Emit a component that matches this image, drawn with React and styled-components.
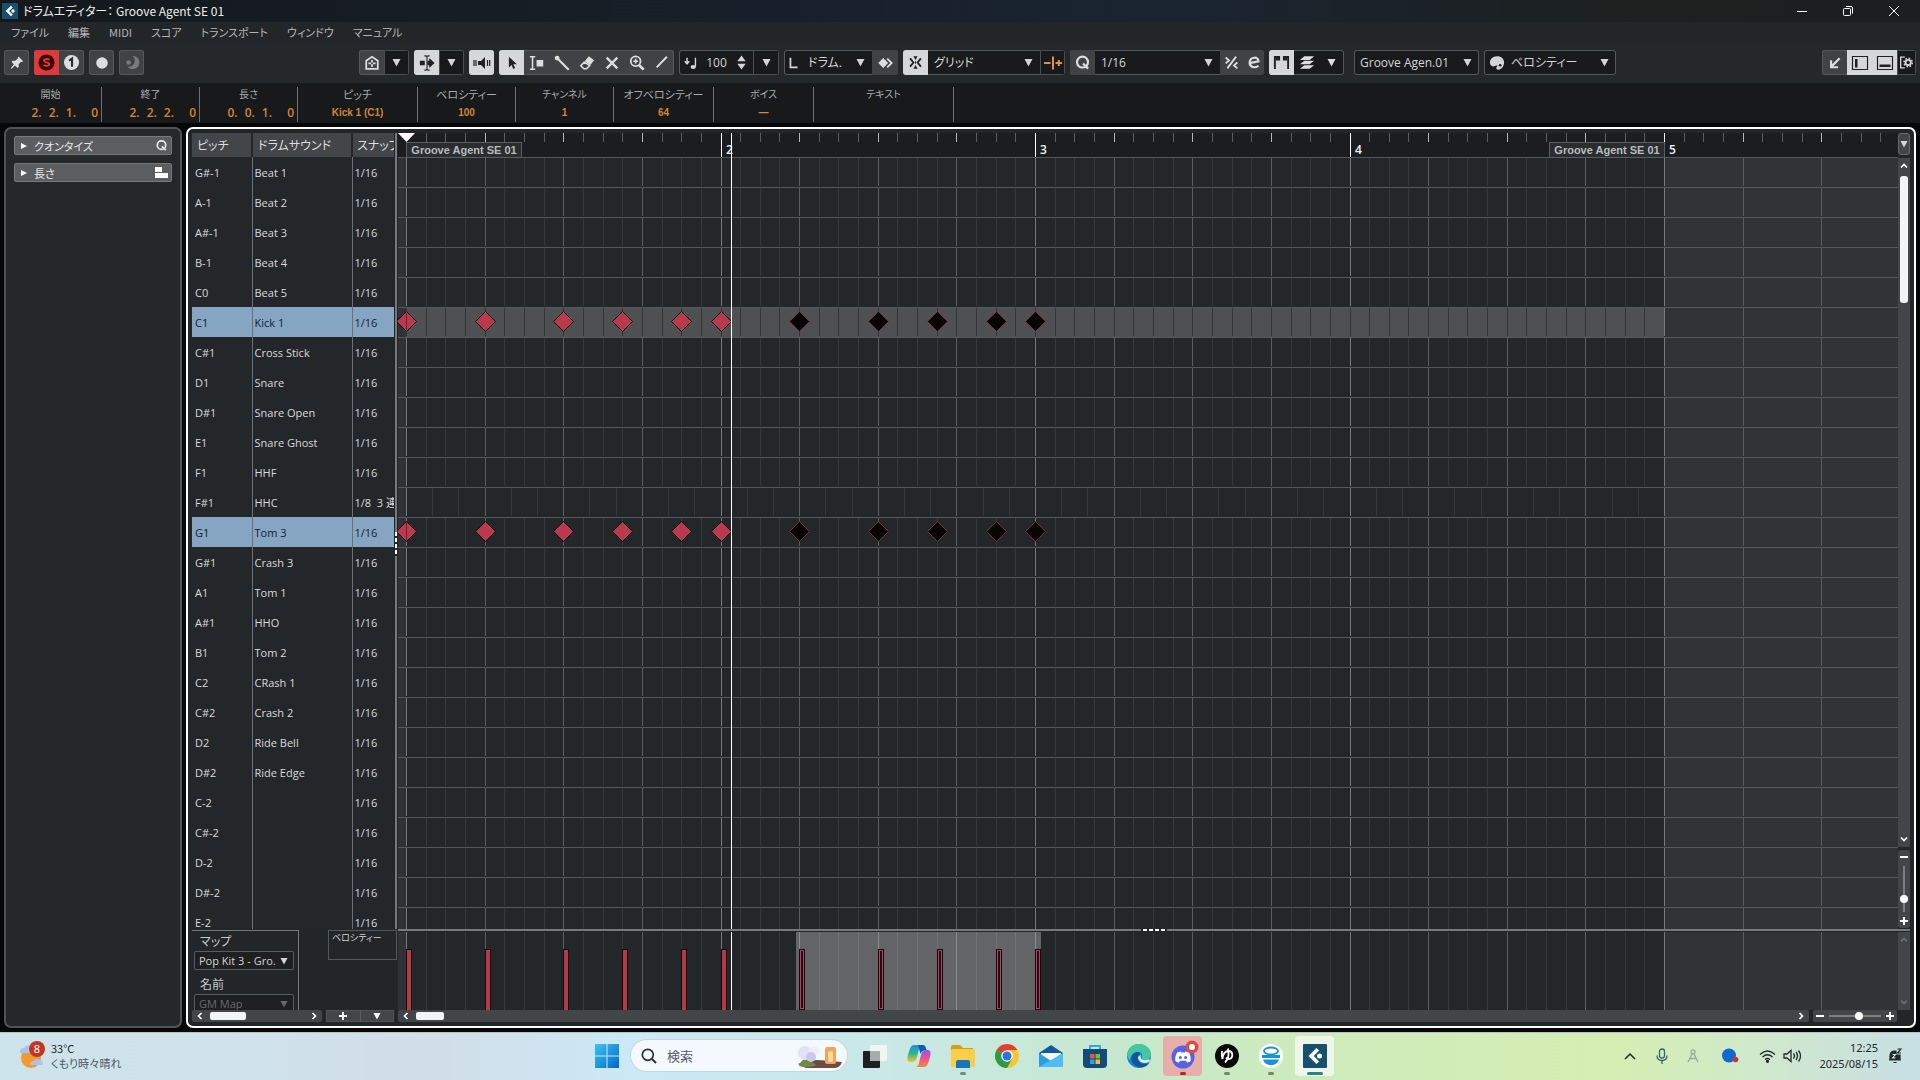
import React from "react";
import styled, { createGlobalStyle, css } from "styled-components";

const UI_FONT = '"Noto Sans CJK JP", "Noto Sans", sans-serif';
const LATIN_FONT = '"Open Sans", "Noto Sans CJK JP", sans-serif';
const ARIAL_FONT = '"Liberation Sans", "Noto Sans CJK JP", sans-serif';

const Global = createGlobalStyle`
  * { box-sizing: border-box; }
  body {
    margin: 0;
    background: #060708;
    color: #d4d5d6;
    font: 12px/16px ${UI_FONT};
    font-feature-settings: "palt";
    overflow: hidden;
  }
  button, select, input {
    margin: 0;
    padding: 0;
    border: 0;
    border-radius: 0;
    background: none;
    color: inherit;
    font: inherit;
    font-feature-settings: inherit;
  }
  svg { display: block; flex: none; }
`;

const Screen = styled.div`
  display: flex;
  flex-direction: column;
  height: 100vh;
`;

/* ---------- title bar and menu ---------- */

const TitleBar = styled.header`
  display: flex;
  align-items: center;
  height: 22px;
  padding-left: 2px;
  gap: 5px;
  background: linear-gradient(90deg, #14181b 0%, #17202a 40%, #1a2430 62%, #1c201f 84%, #1c1f1f 100%);
  color: #eceded;
`;
const Title = styled.h1`
  flex: 1;
  margin: 0;
  font-size: 12px;
  line-height: 16px;
  font-weight: 400;
  white-space: pre;
`;
const WindowButtons = styled.div`
  display: flex;
  padding-right: 3px;
`;
const WindowButton = styled.button`
  display: grid;
  place-items: center;
  width: 46px;
  height: 22px;
`;
const MenuBar = styled.nav`
  display: flex;
  gap: 19px;
  height: 22px;
  padding: 0 0 2px 11px;
  align-items: center;
  background: #232628;
  color: #b4b6b8;
`;
const MenuLink = styled.a`
  color: inherit;
  text-decoration: none;
  font-size: 11px;
  line-height: 16px;
`;

/* ---------- toolbar ---------- */

const Toolbar = styled.div`
  display: flex;
  align-items: center;
  justify-content: space-between;
  height: 39px;
  padding: 0 4px 2px;
  background: #25282b;
`;
const ToolSide = styled.div`
  display: flex;
  gap: 5px;
`;
const ToolMain = styled.div`
  display: flex;
  gap: 5px;
  flex: 1;
  padding-left: 215px;
`;
const Group = styled.div`
  display: flex;
  height: 25px;
  border-radius: 3px;
  overflow: hidden;
  box-shadow: inset 0 0 0 1px #55585b;
  background: ${(p) => (p.$dark ? "#181a1c" : "#404346")};
  ${(p) => p.$gap && css`margin-left: 5px;`}
`;
const tones = {
  plain: ["transparent", "#dcdddd"],
  grey: ["#404346", "#dcdddd"],
  on: ["#d6d7d8", "#1f2123"],
  red: ["#de3a3a", "#3a0808"],
  dark: ["#17191b", "#d4d5d6"],
  dim: ["transparent", "#77797b"],
};
const Tool = styled.button`
  display: grid;
  place-items: center;
  width: ${(p) => p.$w || 25}px;
  height: 25px;
  background: ${(p) => tones[p.$tone || "plain"][0]};
  color: ${(p) => tones[p.$tone || "plain"][1]};
  ${(p) => p.$tone === "dark" && css`box-shadow: inset 0 0 0 1px #4b4e51;`}
`;
const Field = styled.label`
  display: flex;
  align-items: center;
  gap: ${(p) => (p.$tight ? 2 : 6)}px;
  width: ${(p) => p.$w}px;
  height: 25px;
  padding: 0 ${(p) => (p.$tight ? 4 : 7)}px 0 ${(p) => p.$pad || 6}px;
`;
const PlainSelect = styled.select`
  appearance: none;
  flex: 1;
  min-width: 0;
  height: 18px;
  line-height: 18px;
  font-family: ${LATIN_FONT};
  font-size: 12px;
  opacity: 1;
`;
const VelocityInput = styled.input`
  flex: 1;
  min-width: 0;
  text-align: center;
  font-family: ${LATIN_FONT};
  font-size: 12px;
`;

/* ---------- info line ---------- */

const InfoLine = styled.dl`
  display: flex;
  height: 40px;
  margin: 0;
  padding: 4px 0 1px;
  background: #17191b;
`;
const InfoCell = styled.div`
  display: flex;
  flex-direction: column;
  align-items: center;
  width: ${(p) => p.$w}px;
  border-right: 1px solid #6d7073;
`;
const InfoLabel = styled.dt`
  height: 17px;
  font-size: ${(p) => (p.$large ? 11 : 10)}px;
  line-height: 14px;
  color: #a9abad;
`;
const InfoValue = styled.dd`
  margin: 0;
  height: 17px;
  line-height: 17px;
  color: #cf8838;
  font-family: ${(p) => (p.$time ? LATIN_FONT : ARIAL_FONT)};
  font-size: ${(p) => (p.$time ? 12 : 10)}px;
  font-weight: ${(p) => (p.$time ? 600 : 700)};
  ${(p) => p.$time && css`
    display: flex;
    align-self: flex-end;
    gap: 7px;
    padding-right: 3px;
  `}
`;
const LastTick = styled.span`
  min-width: 15px;
  text-align: right;
`;

/* ---------- workspace ---------- */

const Workspace = styled.main`
  flex: 1;
  min-height: 0;
  display: flex;
  gap: 4px;
  padding: 4px;
`;
const Inspector = styled.aside`
  display: flex;
  flex-direction: column;
  gap: 8px;
  width: 178px;
  padding: 7px 8px;
  border: 2px solid #515457;
  border-radius: 7px;
  background: #25282b;
`;
const InspectorTab = styled.button`
  display: flex;
  align-items: center;
  gap: 7px;
  height: 19px;
  padding: 0 3px 0 6px;
  border: 1px solid #77797b;
  border-radius: 2px;
  background: #5b5e60;
  color: #e8e9e9;
  span { flex: 1; text-align: left; font-size: 11px; }
`;
const Editor = styled.section`
  flex: 1;
  min-width: 0;
  display: flex;
  flex-direction: column;
  padding: 4px;
  border: 2px solid #fff;
  border-radius: 7px;
  background: #232628;
`;
const TopRow = styled.div`
  flex: 1;
  min-height: 0;
  display: flex;
`;
const ListPane = styled.div`
  width: 203px;
  overflow: hidden;
`;
const DrumTable = styled.table`
  table-layout: fixed;
  width: 202px;
  border-collapse: collapse;
  font-family: ${LATIN_FONT};
`;
const HeadCell = styled.th`
  height: 24px;
  padding: 0 0 0 5px;
  border-right: 2px solid #232628;
  background: #434648;
  text-align: left;
  font-family: ${UI_FONT};
  font-size: 12px;
  font-weight: 400;
  line-height: 20px;
  color: #dcddde;
  white-space: nowrap;
  overflow: hidden;
  &:last-child { border-right: 0; padding-left: 4px; }
`;
const DrumRow = styled.tr`
  height: 30px;
  color: ${(p) => (p.$selected ? "#0d2036" : "#d9dadb")};
  background: ${(p) => (p.$selected ? "#86a5c3" : "#24272a")};
`;
const DrumCell = styled.td`
  padding: 1px 0 0 3px;
  font-size: 11px;
  line-height: 16px;
  white-space: pre;
  overflow: hidden;
  & + & { padding-left: 2px; border-left: 1px solid #6d7073; }
`;
const VDivider = styled.div`
  display: flex;
  align-items: center;
  width: 2px;
  margin-right: 1px;
  padding-top: 26px;
  background: #77797b;
`;
const VGrip = styled.i`
  width: 2px;
  height: 24px;
  background: repeating-linear-gradient(180deg, #fff 0 4px, #232628 4px 6px);
`;
const Canvas = styled.div`
  flex: 1;
  min-width: 0;
  display: flex;
  flex-direction: column;
  overflow: hidden;
`;
const Ruler = styled.div`
  position: relative;
  height: 25px;
  background: #1b1d20;
  overflow: hidden;
`;
const Notes = styled.div`
  flex: 1;
  min-height: 0;
  overflow: hidden;
  background: #24272a;
`;
const BarNumber = styled.span`
  position: absolute;
  left: ${(p) => p.$x}px;
  top: 9px;
  font: 600 12px/16px ${LATIN_FONT};
  color: #f2f2f2;
`;
const PartLabel = styled.span`
  position: absolute;
  left: ${(p) => p.$x}px;
  top: 9px;
  width: 116px;
  height: 16px;
  border: 1px solid #5b5e60;
  background: #2a2d2f;
  color: #b9bbbd;
  text-align: center;
  font: 700 11px/14px ${ARIAL_FONT};
  white-space: nowrap;
`;
const Strip = styled.div`
  display: flex;
  flex-direction: column;
  width: 12px;
`;
const RulerMenu = styled.button`
  display: grid;
  place-items: center;
  height: 22px;
  margin-bottom: 3px;
  border: 1px solid #66696b;
  border-radius: 3px;
  background: #434648;
`;
const VScroll = styled.div`
  display: flex;
  flex-direction: column;
  align-items: center;
  flex: 1;
  padding: 3px 0;
  background: #434648;
  color: ${(p) => (p.$dim ? "#6d7073" : "#fff")};
`;
const VThumb = styled.div`
  width: 8px;
  height: 127px;
  margin: 5px 0 auto;
  border-radius: 3px;
  background: #f2f4f5;
`;
const Spacer = styled.div`
  flex: 1;
`;
const ArrowButton = styled.button`
  display: grid;
  place-items: center;
  width: 12px;
  height: 10px;
`;
const VZoom = styled.div`
  display: flex;
  flex-direction: column;
  align-items: center;
  height: 78px;
  margin: 3px 0 1px;
  padding: 2px 0;
  border-radius: 3px;
  background: #434648;
  color: #fff;
`;
const thumb = css`
  -webkit-appearance: none;
  width: 8px;
  height: 8px;
  border-radius: 50%;
  background: #fff;
`;
const VRange = styled.input`
  -webkit-appearance: none;
  appearance: none;
  writing-mode: vertical-lr;
  width: 8px;
  flex: 1;
  min-height: 0;
  margin: 4px 0;
  background: linear-gradient(90deg, transparent 3px, #7d8082 3px 5px, transparent 5px);
  &::-webkit-slider-thumb { ${thumb} }
`;
const HRange = styled.input`
  -webkit-appearance: none;
  appearance: none;
  flex: 1;
  min-width: 0;
  height: 8px;
  margin: 0 3px;
  background: linear-gradient(180deg, transparent 3px, #7d8082 3px 5px, transparent 5px);
  &::-webkit-slider-thumb { ${thumb} }
`;

/* ---------- controller lane ---------- */

const BottomRow = styled.div`
  display: flex;
  height: 81px;
`;
const MapPane = styled.div`
  display: flex;
  width: 206px;
  padding-top: 1px;
  align-items: flex-start;
  justify-content: space-between;
  overflow: hidden;
`;
const MapBox = styled.div`
  display: flex;
  flex-direction: column;
  width: 107px;
  height: 100px;
  padding: 2px 4px 0 2px;
  border-top: 1px solid #77797b;
  border-right: 1px solid #77797b;
`;
const MapLabel = styled.label`
  padding-left: 6px;
  margin-bottom: 2px;
  font-size: 12px;
  line-height: 16px;
  color: #c6c8ca;
`;
const MapSelect = styled.div`
  display: flex;
  align-items: center;
  gap: 2px;
  height: 19px;
  margin-bottom: 6px;
  padding: 0 5px 0 4px;
  border: 1px solid #595c5f;
  border-radius: 2px;
  background: #1d1f21;
  color: ${(p) => (p.$off ? "#66696b" : "#d4d5d6")};
  ${PlainSelect} { font-size: 11px; height: 16px; line-height: 16px; color: inherit; opacity: 1; }
`;
const LaneName = styled.button`
  width: 69px;
  height: 30px;
  padding: 0 0 0 3px;
  display: flex;
  margin-right: 1px;
  border: 1px solid #55585b;
  font-size: 9px;
  line-height: 14px;
`;
const LaneArea = styled.div`
  flex: 1;
  min-width: 0;
  display: flex;
  flex-direction: column;
`;
const HDivider = styled.div`
  display: flex;
  justify-content: center;
  height: 2px;
  margin-bottom: 1px;
  background: #77797b;
`;
const HGrip = styled.i`
  width: 26px;
  background: repeating-linear-gradient(90deg, #232628 0 2px, #fff 2px 6px);
`;
const LaneRow = styled.div`
  flex: 1;
  min-height: 0;
  display: flex;
`;
const Lane = styled.div`
  flex: 1;
  min-width: 0;
  overflow: hidden;
`;
const ScrollRow = styled.div`
  display: flex;
  height: 12px;
  padding-right: 13px;
  color: #fff;
`;
const HScroll = styled.div`
  display: flex;
  align-items: center;
  ${(p) => (p.$w ? css`width: ${p.$w}px;` : css`flex: 1;`)}
  margin-right: 4px;
  padding: 0 2px;
  border-radius: 2px;
  background: #434648;
`;
const HThumb = styled.div`
  width: ${(p) => p.$w}px;
  height: 8px;
  margin: 0 auto 0 4px;
  border-radius: 2px;
  background: #f2f4f5;
`;
const AddGroup = styled.div`
  display: flex;
  width: 68px;
  margin-right: 4px;
  border: 1px solid #515457;
  background: #434648;
`;
const AddButton = styled.button`
  display: grid;
  place-items: center;
  flex: 1;
  & + & { border-left: 1px solid #5b5e60; }
`;
const HZoom = styled.div`
  display: flex;
  align-items: center;
  width: 84px;
  padding: 0 1px;
  border-radius: 2px;
  background: #434648;
`;

/* ---------- taskbar ---------- */

const Taskbar = styled.footer`
  display: grid;
  grid-template-columns: 1fr auto 1fr;
  align-items: center;
  height: 48px;
  padding: 0 18px 2px 19px;
  border-top: 1px solid #b7c4c6;
  background: linear-gradient(90deg, #cde3ea 0%, #cfe2ea 12%, #d1dde8 22%, #cce9f5 33%, #c9e8ea 44%, #c7e8cf 58%, #cdebbb 68%, #d6eeb2 84%, #d0e9c8 91%, #c8dfe6 100%);
  color: #20282c;
`;
const Weather = styled.button`
  display: flex;
  gap: 6px;
  text-align: left;
  justify-self: start;
  font-size: 11px;
  line-height: 15px;
`;
const WeatherText = styled.span`
  display: grid;
  small { font-size: 11px; color: #4d595f; }
`;
const Apps = styled.div`
  display: flex;
  align-items: center;
  gap: 5px;
`;
const AppButton = styled.button`
  display: flex;
  flex-direction: column;
  align-items: center;
  justify-content: flex-end;
  gap: 4px;
  width: 39px;
  height: 40px;
  padding-bottom: 1px;
  border-radius: 4px;
  background: ${(p) => p.$bg || "none"};
`;
const Dot = styled.i`
  width: ${(p) => p.$w || 6}px;
  height: 3px;
  border-radius: 2px;
  background: ${(p) => p.$c || "transparent"};
`;
const Search = styled.label`
  display: flex;
  align-items: center;
  gap: 10px;
  width: 216px;
  height: 31px;
  margin: 0 3px 0 0;
  padding: 0 3px 0 10px;
  border-radius: 16px;
  background: #f3f9fc;
  box-shadow: 0 0 0 1px #c5d7de;
  input { flex: 1; min-width: 0; font-size: 13px; }
  input::placeholder { color: #55606a; opacity: 1; }
`;
const Tray = styled.div`
  display: flex;
  align-items: center;
  justify-self: end;
  gap: 10px;
`;
const TrayButton = styled.button`
  display: grid;
  place-items: center;
  width: ${(p) => p.$w || 22}px;
  height: 32px;
`;
const Clock = styled.time`
  width: 62px;
  text-align: right;
  font: 11px/16px "Noto Sans", sans-serif;
  white-space: pre-line;
`;

/* ---------- icons ---------- */

const Caret = ({ s = 9 }) => (
  <svg width={s} height={s} viewBox="0 0 9 9"><path d="M0.5 1h8L4.500 8.500z" fill="currentColor" /></svg>
);
const Chevron = ({ r = 0 }) => (
  <svg width="8" height="8" viewBox="0 0 8 8"><path d="M1 5.500 4 2.500 7 5.500" transform={`rotate(${r} 4 4)`} fill="none" stroke="currentColor" strokeWidth="1.600" /></svg>
);
const Sign = ({ plus }) => (
  <svg width="8" height="8" viewBox="0 0 8 8" shapeRendering="crispEdges"><path d={plus ? "M0 4h8M4 0v8" : "M0 4h8"} stroke="currentColor" strokeWidth="2" /></svg>
);
const Disclosure = () => (
  <svg width="6" height="8" viewBox="0 0 6 8"><path d="M0 1l6 3-6 3z" fill="#fff" /></svg>
);
const glyphs = {
  pin: <path fill="currentColor" d="M11 2l5 5-1.500 1-1-.3-2.700 2.800.2 2.700-1.400 1.300-2.800-2.800L3 15.500l-1-.5 3.500-4.500L2.800 7.800 4 6.400l3 .2L10 3.800 9.700 3z" />,
  solo: <><circle cx="9" cy="9" r="8.500" fill="currentColor" /><path d="M12 6.300C10.500 4.800 6.300 5 6.300 7c0 2.300 5.500 1.400 5.500 3.800 0 2.100-4.300 2.300-6 .7" fill="none" stroke="#de3a3a" strokeWidth="1.900" /></>,
  one: <><circle cx="9" cy="9" r="8" fill="currentColor" /><path d="M6.500 7 9.600 4.800V13.500" fill="none" stroke="#2a2c2e" strokeWidth="2.200" /></>,
  rec: <circle cx="9" cy="9" r="6.500" fill="currentColor" />,
  moon: <><path d="M10 2a7 7 0 1 1-5 11.500A6.500 6.500 0 0 0 10 2z" fill="currentColor" /><circle cx="6" cy="9" r="2.500" fill="currentColor" /></>,
  home: <><path d="M2.500 15.500V6.500L9 2l6.500 4.500v9z" fill="none" stroke="currentColor" strokeWidth="2" /><path d="M9 5.500v8M5 9.500h8" stroke="currentColor" strokeWidth="2" strokeDasharray="3 2" /></>,
  scroll: <><path d="M1 6.500h5.500v5H1zM11.500 3.500 17.500 9l-6 5.500v-3h-2v-5h2z" fill="currentColor" /><path d="M6 1h2l1 1 1-1h2M6 17h2l1-1 1 1h2M9 1v16" stroke="currentColor" strokeWidth="1.200" fill="none" /></>,
  speaker: <><path d="M5 7h3l4-4v12l-4-4H5z" fill="currentColor" /><path d="M1 6v6M3 6v6M14.500 6v6M16.700 6v6" stroke="currentColor" strokeWidth="1.200" /></>,
  arrow: <path d="M5.500 2v12l3-2.800 2 4.500 2-1-2-4.300h4z" fill="currentColor" />,
  range: <><path d="M1 2h6M1 16h6M4 2v14" stroke="currentColor" strokeWidth="1.800" /><path d="M8.500 5.500h7.500v7.500h-7.500z" fill="currentColor" /></>,
  stick: <><path d="M4 4l12.500 12.500" stroke="currentColor" strokeWidth="2.400" /><circle cx="3.500" cy="3.500" r="2.700" fill="currentColor" /></>,
  eraser: <><path d="M11 1.500l6 4.500-4.500 5.500L6.500 7z" fill="currentColor" /><path d="M6 8 2 12l3.500 3.500h3l3.500-3.500z" fill="none" stroke="currentColor" strokeWidth="1.700" /></>,
  mute: <path d="M3 3l12 12M15 3l-12 12" stroke="currentColor" strokeWidth="2.600" />,
  zoom: <><circle cx="7.500" cy="7" r="5.500" fill="none" stroke="currentColor" strokeWidth="2" /><path d="M11.500 11.500l5 5" stroke="currentColor" strokeWidth="3" /><path d="M4.800 7h5.400M7.500 4.300v5.400" stroke="currentColor" strokeWidth="1.800" /></>,
  line: <><path d="M3 14 14.500 2" stroke="currentColor" strokeWidth="2.200" /></>,
  noteVel: <><path d="M4.500 3v7M2 7l2.500 3L7 7" stroke="currentColor" strokeWidth="1.700" fill="none" /><path d="M14 3v10" stroke="currentColor" strokeWidth="1.500" /><ellipse cx="11.500" cy="13.500" rx="3" ry="2.300" fill="currentColor" /></>,
  updown: <path d="M4 7.500 9 0.500l5 7zM4 10.500l5 7 5-7z" fill="currentColor" />,
  corner: <path d="M5 3v11h8" fill="none" stroke="currentColor" strokeWidth="2" />,
  diamonds: <><path d="M7 3.500 12.500 9 7 14.500 1.500 9z" fill="currentColor" /><path d="M11.500 4 16.500 9l-5 5" fill="none" stroke="currentColor" strokeWidth="2" /></>,
  snap: <><path d="M2.500 4 6.500 9l-4 5M15.500 4l-4 5 4 5" fill="none" stroke="currentColor" strokeWidth="2.200" /><path d="M6.500 1.500h5L9 6zM6.500 16.500h5L9 12z" fill="currentColor" /><path d="M9 7.500v3" stroke="currentColor" strokeWidth="1.200" /></>,
  gridType: <path d="M0 9h6.500M9 2.500v13M11.500 9H18M14.800 6v6" stroke="#e0913c" strokeWidth="2" fill="none" />,
  q: <><circle cx="9" cy="8.500" r="5.800" fill="none" stroke="currentColor" strokeWidth="2.300" /><path d="M9.500 10l5.500 5.500" stroke="currentColor" strokeWidth="2.300" /></>,
  iq: <><path d="M14.500 2 4 16" stroke="currentColor" strokeWidth="2.200" /><path d="M2 3l4 3.500L2 10M16 9l-4 3.500 4 3.500" fill="none" stroke="currentColor" strokeWidth="2.200" /></>,
  edit: <path d="M4 9.800 15 7.500c0-6-9.500-5.500-10.500.5S9.500 16.500 15 13" fill="none" stroke="currentColor" strokeWidth="2.600" />,
  step: <><path d="M2 16V3h5M11 3h5v13" fill="none" stroke="currentColor" strokeWidth="2" /><path d="M3 2h4.500v5H3zM10.500 2H15v5h-4.500z" fill="currentColor" /></>,
  layers: <path d="M6 1.500h11l-5 4H1zM6 6.500h11l-5 4H1zM6 11.500h11l-5 4H1z" fill="currentColor" />,
  palette: <><path d="M9 1.500c5 0 8 3 8 7s-3 8-6.500 8c-3 0-2.500-2.500-1.500-3.500S8 11 6.500 12.500 1 12 1 8.500s3-7 8-7z" fill="currentColor" /><circle cx="12.500" cy="11.500" r="1.500" fill="#181a1c" /></>,
  openArrow: <path d="M15 3 5 13M4 5.500v9h9" fill="none" stroke="currentColor" strokeWidth="2.800" />,
  zoneLeft: <><path d="M1.500 2.500h15v13h-15z" fill="none" stroke="currentColor" strokeWidth="1.200" /><path d="M4 5h2.500v8.500H4z" fill="currentColor" /></>,
  zoneDown: <><path d="M1.500 2.500h15v13h-15z" fill="none" stroke="currentColor" strokeWidth="1.200" /><path d="M3.500 10.500h11V13h-11z" fill="currentColor" /></>,
  setup: <><path d="M7 2.500H2v13h5" fill="none" stroke="currentColor" strokeWidth="1.600" /><circle cx="11" cy="9" r="3.200" fill="none" stroke="currentColor" strokeWidth="2.200" /><circle cx="11" cy="9" r="5" fill="none" stroke="currentColor" strokeWidth="1.800" strokeDasharray="2 1.900" /></>,
};
const Icon = ({ n, s = 16 }) => <svg width={s} height={s} viewBox="0 0 18 18">{glyphs[n]}</svg>;

const CubaseMark = ({ s }) => (
  <svg width={s} height={s} viewBox="0 0 24 24">
    <rect width="24" height="24" rx="1" fill="#17506f" />
    <path d="M13.500 4 5.500 12l8 8 2.600-2.600L10.700 12l5.400-5.400z" fill="#fff" />
    <circle cx="16.500" cy="12" r="2.500" fill="#fff" />
  </svg>
);

/* ---------- drum editor data ---------- */

const ORIGIN = 8;
const FOUR_BARS = 1258;
const at = (sixteenth) => ORIGIN + Math.round((sixteenth * FOUR_BARS) / 64);
const TOTAL = 160;
const CURSOR = 333;
const ROW = 30;

const drums = [
  ["G#-1", "Beat 1"], ["A-1", "Beat 2"], ["A#-1", "Beat 3"], ["B-1", "Beat 4"], ["C0", "Beat 5"],
  ["C1", "Kick 1"], ["C#1", "Cross Stick"], ["D1", "Snare"], ["D#1", "Snare Open"], ["E1", "Snare Ghost"],
  ["F1", "HHF"], ["F#1", "HHC", "1/8  3 連"], ["G1", "Tom 3"], ["G#1", "Crash 3"], ["A1", "Tom 1"],
  ["A#1", "HHO"], ["B1", "Tom 2"], ["C2", "CRash 1"], ["C#2", "Crash 2"], ["D2", "Ride Bell"],
  ["D#2", "Ride Edge"], ["C-2", ""], ["C#-2", ""], ["D-2", ""], ["D#-2", ""], ["E-2", ""],
];
const selectedRows = [5, 12];
const tripletRow = 11;
const steps = [0, 4, 8, 11, 14, 16, 20, 24, 27, 30, 32];
const isSelectedStep = (s) => s >= 20;
const range = (n) => Array.from({ length: n }, (_, i) => i);

function RulerTicks() {
  return (
    <svg width="100%" height="25" shapeRendering="crispEdges">
      {range(TOTAL).map((i) => {
        const bar = i % 16 === 0 && i > 0;
        const beat = i % 4 === 0;
        if (i === 0) return null;
        return <rect key={i} x={at(i)} y="0" width="1" height={bar && i !== 64 ? 24 : 9} fill={bar ? "#fff" : beat ? "#b4b6b8" : "#5b5e60"} />;
      })}
      <rect y="24" width="100%" height="1" fill="#55575a" />
      <rect x={CURSOR} width="1" height="25" fill="#fff" />
      <path d="M0 0h17l-8.500 9z" fill="#fff" shapeRendering="auto" />
    </svg>
  );
}

const lineColor = (i) => (i % 16 === 0 ? "#77797b" : i % 4 === 0 ? "#5b5e60" : "#35383b");

function NoteGrid() {
  const end = at(64);
  const height = drums.length * ROW + 300;
  return (
    <svg width="100%" height={height} shapeRendering="crispEdges">
      <rect width={ORIGIN} height={height} fill="#303236" />
      <rect x={end} width="3000" height={height} fill="#323336" />
      <rect x={ORIGIN} y={5 * ROW - 1} width={end - ORIGIN} height={ROW + 1} fill="#4e5052" />
      {drums.map((_, r) => (
        <g key={r}>
          {range(TOTAL).map((i) => {
            if (i > 64 && i % 4) return null;
            if (r === tripletRow && i % 4) return null;
            const faint = r === 5 && i < 64;
            return <rect key={i} x={at(i)} y={r * ROW} width="1" height={ROW - 2} fill={faint ? "#333538" : lineColor(i)} />;
          })}
          {r === tripletRow && range(48).filter((t) => t % 3).map((t) => (
            <rect key={`t${t}`} x={at((t * 4) / 3)} y={r * ROW} width="1" height={ROW - 2} fill="#35383b" />
          ))}
          <rect y={r * ROW + ROW - 1} width="100%" height="1" fill="#55575a" />
        </g>
      ))}
      {selectedRows.map((r) =>
        steps.map((s) => {
          const x = at(s) + 0.5;
          const y = r * ROW + 13.5;
          const on = isSelectedStep(s);
          return (
            <g key={`${r}-${s}`} shapeRendering="auto">
              <path d={`M${x} ${y - 10}L${x + 10} ${y}L${x} ${y + 10}L${x - 10} ${y}Z`} fill={on ? "#050506" : "#b93a4e"} stroke={on ? "#7d2b38" : "#140b0d"} />
              {on && <path d={`M${x} ${y - 8}L${x + 8} ${y}L${x} ${y + 8}L${x - 8} ${y}Z`} fill="#050506" />}
              {s === 0 && <rect x={at(0)} y={y - 9} width="1" height="18" fill="#6b2531" />}
            </g>
          );
        })
      )}
      <rect x={CURSOR} width="1" height={height} fill="#fff" />
    </svg>
  );
}

function VelocityLane() {
  return (
    <svg width="100%" height="78" shapeRendering="crispEdges">
      <rect width="100%" height="78" fill="#24272a" />
      <rect width={ORIGIN} height="78" fill="#303236" />
      <rect x={at(64)} width="3000" height="78" fill="#323336" />
      <rect x={at(20) - 3} width="245" height="78" fill="#636466" />
      {range(TOTAL).map((i) => {
        if (i > 64 && i % 4) return null;
        const lit = i >= 20 && i <= 32;
        const fill = lit ? (i % 4 ? "#707173" : "#8b8c8e") : lineColor(i);
        return <rect key={i} x={at(i)} width="1" height="78" fill={fill} />;
      })}
      {steps.map((s) => {
        const x = at(s);
        return isSelectedStep(s) ? (
          <g key={s}>
            <rect x={x} y="17" width="6" height="61" fill="#1c060c" />
            <rect x={x + 1} y="18" width="4" height="59" fill="#a34a61" />
            <rect x={x + 2} y="19" width="2" height="57" fill="#2c0a16" />
          </g>
        ) : (
          <g key={s}>
            <rect x={x} y="17" width="6" height="61" fill="#14090b" />
            <rect x={x + 1} y="18" width="4" height="60" fill="#b23a4b" />
          </g>
        );
      })}
      <rect x={CURSOR} width="1" height="78" fill="#fff" />
    </svg>
  );
}

const Select = ({ label, value }) => (
  <>
    <PlainSelect aria-label={label} defaultValue={value}><option>{value}</option></PlainSelect>
    <Caret />
  </>
);

const TimeValue = ({ v }) => (
  <InfoValue $time>
    <span>{v[0]}.</span><span>{v[1]}.</span><span>{v[2]}.</span><LastTick>{v[3]}</LastTick>
  </InfoValue>
);

const info = [
  { w: 102, label: "開始", time: [2, 2, 1, 0] },
  { w: 98, label: "終了", time: [2, 2, 2, 0] },
  { w: 98, label: "長さ", time: [0, 0, 1, 0] },
  { w: 120, label: "ピッチ", value: "Kick 1 (C1)", large: true },
  { w: 98, label: "ベロシティー", value: "100", large: true },
  { w: 98, label: "チャンネル", value: "1" },
  { w: 100, label: "オフベロシティー", value: "64", large: true },
  { w: 100, label: "ボイス", value: "—" },
  { w: 140, label: "テキスト", value: "" },
];

/* ---------- taskbar artwork ---------- */

const art = {
  start: <g><defs><linearGradient id="win" x1="0" y1="0" x2="1" y2="1"><stop offset="0" stopColor="#3fc3f3" /><stop offset="1" stopColor="#0069c8" /></linearGradient></defs><path d="M0 0h11.500v11.500H0zM12.500 0H24v11.500H12.500zM0 12.500h11.500V24H0zM12.500 12.500H24V24H12.500z" fill="url(#win)" /></g>,
  task: <g><rect x="0" y="7" width="17" height="17" rx="1" fill="#1d1f20" /><rect x="7" y="1" width="17" height="16" rx="1" fill="#f4f6f6" fillOpacity=".9" /><rect x="7" y="7" width="10" height="10" fill="#a7abac" /></g>,
  copilot: <g><defs><linearGradient id="cpa" x1="0" y1="0" x2="0" y2="1"><stop offset="0" stopColor="#1e8de8" /><stop offset=".5" stopColor="#2fb58c" /><stop offset="1" stopColor="#f3c52b" /></linearGradient><linearGradient id="cpb" x1="0" y1="0" x2="0" y2="1"><stop offset="0" stopColor="#8c5bf0" /><stop offset=".5" stopColor="#ee4f8d" /><stop offset="1" stopColor="#f58a3a" /></linearGradient></defs><path d="M7 1h8c-3 1-3 5-4.500 10-1.300 5-2 7-5.500 7H3c-3 0-3-4-2-7C3 4 4 1 7 1z" fill="url(#cpa)" /><path d="M17 23H9c3-1 3-5 4.500-10 1.300-5 2-7 5.500-7h2c3 0 3 4 2 7-2 7-3 10-6 10z" fill="url(#cpb)" /><path d="M11 1h5c2 0 3 2 3.500 5-3 0-5 1-6 4z" fill="#1658b8" /></g>,
  folder: <g><path d="M0 3q0-2 2-2h7l3 3h10v6H0z" fill="#d89c1c" /><rect y="5" width="24" height="18" rx="1.500" fill="#f9cf4a" /><path d="M5 24v-6q0-2 2-2h10q2 0 2 2v6z" fill="#1675be" /></g>,
  chrome: <g><circle cx="12" cy="12" r="12" fill="#f7c62f" /><path d="M12 12 1.600 6A12 12 0 0 1 22.400 6H12z" fill="#e23e31" /><path d="M12 12 1.600 6A12 12 0 0 0 12 24l5-9z" fill="#2a9c48" /><circle cx="12" cy="12" r="5.800" fill="#fff" /><circle cx="12" cy="12" r="4.500" fill="#2a72e0" /></g>,
  mail: <g><path d="M0 9 12 1l12 8v14H0z" fill="#155a9e" /><path d="M2 9h20v8H2z" fill="#f3f8fb" /><path d="M0 9l12 8 12-8v14H0z" fill="#2f9ce0" /><path d="M0 23 24 9v14z" fill="#4fbdf2" /></g>,
  store: <g><path d="M7 6V2h10v4" fill="none" stroke="#2fa9e2" strokeWidth="2" /><path d="M0 5h24v15q0 4-4 4H4q-4 0-4-4z" fill="#124a78" /><path d="M7 10h4.500v4.500H7z" fill="#ef5535" /><path d="M12.500 10H17v4.500h-4.500z" fill="#7fba3a" /><path d="M7 15.500h4.500V20H7z" fill="#29a3ea" /><path d="M12.500 15.500H17V20h-4.500z" fill="#f9bc25" /></g>,
  edge: <g><circle cx="12" cy="12" r="12" fill="#1b86cc" /><path d="M0 11C1 3 7 0 12 0c7 0 12 5 12 10 0 4-3 6-6 6s-4-1-3-3 0-5-4-5c-5 0-8 4-8 8a10 10 0 0 1-3-5z" fill="#45c8a2" /><path d="M11 8c-5 0-8 5-6 10 2 4 7 6 11 5 3-.600 5-2 6-4-6 3-13-1-11-7 .5-1.500 1.500-2.500 2.500-3z" fill="#12549c" /><path d="M14 11c-2 4 3 7 8 4l1 2c-5 4-12 1-12-4z" fill="#eafaf4" /></g>,
  discord: <g><circle cx="12" cy="13" r="11.500" fill="#5662e8" /><path d="M6 8.500 9.500 7.500l.7 1h3.600l.7-1L18 8.500c1.500 3 2 5.500 1.700 8.500-1.700 1.200-3 1.500-3.700 1.500l-1-1.700H9l-1 1.700c-.7 0-2-.3-3.700-1.500C4 14 4.500 11.500 6 8.500z" fill="#fff" /><circle cx="9.400" cy="13.500" r="1.500" fill="#5662e8" /><circle cx="14.600" cy="13.500" r="1.500" fill="#5662e8" /><circle cx="21" cy="3" r="6.500" fill="#dc4a4a" /><circle cx="21" cy="3" r="3" fill="#fff" /></g>,
  yu: <g><circle cx="12" cy="12" r="12" fill="#0a0a0a" /><path d="M7 7c-.5 4-.3 6 .5 8 0-5 3-8 6-8 5 0 5 8 0 8-1.500 0-2-1-2.500-1.500M13 4.500c1 6 1 10-3 14" fill="none" stroke="#fff" strokeWidth="1.800" /></g>,
  blueball: <g><circle cx="12" cy="12" r="12" fill="#fff" /><ellipse cx="12" cy="7" rx="7" ry="3.500" fill="none" stroke="#1594d2" strokeWidth="1.800" /><path d="M3 11h18v3H3zM4 15.500h16C18 23 6 23 4 15.500z" fill="#1594d2" /></g>,
};
const Art = ({ n }) => <svg width="24" height="24" viewBox="0 0 24 24" overflow="visible">{art[n]}</svg>;

const apps = [
  { n: "task", label: "タスク ビュー" }, { n: "copilot", label: "Copilot" }, { n: "folder", label: "エクスプローラー", dot: "#6d8a8e" },
  { n: "chrome", label: "Chrome" }, { n: "mail", label: "Mail" }, { n: "store", label: "Store" }, { n: "edge", label: "Edge" },
  { n: "discord", label: "Discord", dot: "#b02a1e", bg: "#e8aeab" }, { n: "yu", label: "ゆ", dot: "#6d8a6e" }, { n: "blueball", label: "Browser", dot: "#6d8a6e" },
];

export default function App() {
  return (
    <Screen>
      <Global />
      <TitleBar>
        <CubaseMark s={16} />
        <Title>ドラムエディター： Groove Agent SE 01</Title>
        <WindowButtons>
          <WindowButton aria-label="最小化"><svg width="12" height="12"><path d="M1 6.500h10" stroke="#fff" /></svg></WindowButton>
          <WindowButton aria-label="元に戻す"><svg width="12" height="12" viewBox="0 0 12 12" fill="none" stroke="#fff"><rect x="1.500" y="3.500" width="7" height="7" rx="1" /><path d="M4 1.500h5q1.500 0 1.500 1.500v5.500" /></svg></WindowButton>
          <WindowButton aria-label="閉じる"><svg width="12" height="12"><path d="M1 1l10 10M11 1 1 11" stroke="#fff" /></svg></WindowButton>
        </WindowButtons>
      </TitleBar>
      <MenuBar>
        {["ファイル", "編集", "MIDI", "スコア", "トランスポート", "ウィンドウ", "マニュアル"].map((m) => <MenuLink key={m} href="#">{m}</MenuLink>)}
      </MenuBar>

      <Toolbar>
        <ToolSide>
          <Group><Tool aria-label="ピン"><Icon n="pin" /></Tool></Group>
          <Group><Tool $tone="red" aria-label="ソロ"><Icon n="solo" s={17} /></Tool><Tool aria-label="1"><Icon n="one" s={17} /></Tool></Group>
          <Group><Tool aria-label="録音"><Icon n="rec" /></Tool></Group>
          <Group><Tool $tone="dim" aria-label="レトロスペクト"><Icon n="moon" s={17} /></Tool></Group>
        </ToolSide>
        <ToolMain>
          <Group><Tool aria-label="表示"><Icon n="home" /></Tool><Tool $tone="dark" aria-label="表示メニュー"><Caret /></Tool></Group>
          <Group><Tool $tone="on" aria-label="オートスクロール"><Icon n="scroll" /></Tool><Tool $tone="dark" aria-label="スクロールメニュー"><Caret /></Tool></Group>
          <Group><Tool $tone="on" aria-label="試聴"><Icon n="speaker" s={18} /></Tool></Group>
          <Group>
            <Tool $tone="on" aria-label="選択"><Icon n="arrow" /></Tool>
            {["range", "stick", "eraser", "mute", "zoom", "line"].map((n) => <Tool key={n} aria-label={n}><Icon n={n} /></Tool>)}
          </Group>
          <Group $dark>
            <Field $w={74} $pad={4} $tight><Icon n="noteVel" /><VelocityInput aria-label="ベロシティー" defaultValue="100" /><Icon n="updown" s={15} /></Field>
            <Tool $tone="dark" $w={26} aria-label="ベロシティーメニュー"><Caret /></Tool>
          </Group>
          <Group $dark>
            <Field $w={88} $pad={2}><Icon n="corner" /><Select label="ドラム" value="ドラム." /></Field>
            <Tool $tone="grey" $w={26} aria-label="ドラム表示"><Icon n="diamonds" /></Tool>
          </Group>
          <Group $dark>
            <Tool $tone="on" aria-label="スナップ"><Icon n="snap" s={15} /></Tool>
            <Field $w={112}><Select label="スナップタイプ" value="グリッド" /></Field>
            <Tool $tone="dark" aria-label="グリッドの種類"><Icon n="gridType" s={18} /></Tool>
          </Group>
          <Group $dark>
            <Tool $tone="grey" aria-label="クオンタイズ"><Icon n="q" s={17} /></Tool>
            <Field $w={125}><Select label="クオンタイズプリセット" value="1/16" /></Field>
            <Tool $tone="grey" $w={22} aria-label="iQ"><Icon n="iq" s={15} /></Tool>
            <Tool $tone="grey" $w={22} aria-label="クオンタイズパネル"><Icon n="edit" s={15} /></Tool>
          </Group>
          <Group $dark>
            <Tool $tone="on" aria-label="ステップ入力"><Icon n="step" s={17} /></Tool>
            <Tool aria-label="レイヤー"><Icon n="layers" /></Tool>
            <Tool aria-label="レイヤーメニュー"><Caret /></Tool>
          </Group>
          <Group $dark $gap><Field $w={125}><Select label="パート" value="Groove Agen.01" /></Field></Group>
          <Group $dark><Field $w={132} $pad={5}><Icon n="palette" /><Select label="カラー" value="ベロシティー" /></Field></Group>
        </ToolMain>
        <Group>
          <Tool aria-label="下ゾーンで開く"><Icon n="openArrow" s={14} /></Tool>
          <Tool $tone="on" aria-label="左ゾーン"><Icon n="zoneLeft" s={18} /></Tool>
          <Tool $tone="on" aria-label="下ゾーン"><Icon n="zoneDown" s={18} /></Tool>
          <Tool $tone="dark" $w={19} aria-label="設定"><Icon n="setup" s={15} /></Tool>
        </Group>
      </Toolbar>

      <InfoLine>
        {info.map((c) => (
          <InfoCell key={c.label} $w={c.w}>
            <InfoLabel $large={c.large}>{c.label}</InfoLabel>
            {c.time ? <TimeValue v={c.time} /> : <InfoValue>{c.value}</InfoValue>}
          </InfoCell>
        ))}
      </InfoLine>

      <Workspace>
        <Inspector>
          <InspectorTab>
            <Disclosure /><span>クオンタイズ</span><Icon n="q" s={13} />
          </InspectorTab>
          <InspectorTab>
            <Disclosure /><span>長さ</span>
            <svg width="13" height="11"><path d="M0 0h7v5H0zM0 6h13v5H0z" fill="#fff" /></svg>
          </InspectorTab>
        </Inspector>

        <Editor>
          <TopRow>
            <ListPane>
              <DrumTable>
                <colgroup><col style={{ width: 60 }} /><col style={{ width: 100 }} /><col /></colgroup>
                <thead><tr><HeadCell>ピッチ</HeadCell><HeadCell>ドラムサウンド</HeadCell><HeadCell>スナップ</HeadCell></tr></thead>
                <tbody>
                  {drums.map(([pitch, name, snap], i) => (
                    <DrumRow key={pitch} $selected={selectedRows.includes(i)}>
                      <DrumCell>{pitch}</DrumCell><DrumCell>{name}</DrumCell><DrumCell>{snap || "1/16"}</DrumCell>
                    </DrumRow>
                  ))}
                </tbody>
              </DrumTable>
            </ListPane>
            <VDivider><VGrip /></VDivider>
            <Canvas>
              <Ruler>
                <RulerTicks />
                <PartLabel $x={at(0)}>Groove Agent SE 01</PartLabel>
                <PartLabel $x={at(64) - 115}>Groove Agent SE 01</PartLabel>
                {[2, 3, 4, 5].map((b) => <BarNumber key={b} $x={at((b - 1) * 16) + 5}>{b}</BarNumber>)}
              </Ruler>
              <Notes><NoteGrid /></Notes>
            </Canvas>
            <Strip>
              <RulerMenu aria-label="ルーラーメニュー"><Caret s={8} /></RulerMenu>
              <VScroll>
                <ArrowButton aria-label="上へ"><Chevron /></ArrowButton>
                <VThumb />
                <ArrowButton aria-label="下へ"><Chevron r={180} /></ArrowButton>
              </VScroll>
              <VZoom>
                <ArrowButton aria-label="縮小"><Sign /></ArrowButton>
                <VRange type="range" aria-label="縦ズーム" defaultValue="77" />
                <ArrowButton aria-label="拡大"><Sign plus /></ArrowButton>
              </VZoom>
            </Strip>
          </TopRow>

          <BottomRow>
            <MapPane>
              <MapBox>
                <MapLabel htmlFor="map">マップ</MapLabel>
                <MapSelect><PlainSelect id="map"><option>Pop Kit 3 - Gro.</option></PlainSelect><Caret s={8} /></MapSelect>
                <MapLabel htmlFor="name">名前</MapLabel>
                <MapSelect $off><PlainSelect id="name" disabled><option>GM Map</option></PlainSelect><Caret s={8} /></MapSelect>
              </MapBox>
              <LaneName>ベロシティー</LaneName>
            </MapPane>
            <LaneArea>
              <HDivider><HGrip /></HDivider>
              <LaneRow>
                <Lane><VelocityLane /></Lane>
                <Strip>
                  <VScroll $dim>
                    <ArrowButton aria-label="上へ"><Chevron /></ArrowButton>
                    <Spacer />
                    <ArrowButton aria-label="下へ"><Chevron r={180} /></ArrowButton>
                  </VScroll>
                </Strip>
              </LaneRow>
            </LaneArea>
          </BottomRow>

          <ScrollRow>
            <HScroll $w={130}><ArrowButton aria-label="左へ"><Chevron r={-90} /></ArrowButton><HThumb $w={36} /><ArrowButton aria-label="右へ"><Chevron r={90} /></ArrowButton></HScroll>
            <AddGroup><AddButton aria-label="追加"><Sign plus /></AddButton><AddButton aria-label="レーンメニュー"><Caret s={8} /></AddButton></AddGroup>
            <HScroll><ArrowButton aria-label="左へ"><Chevron r={-90} /></ArrowButton><HThumb $w={28} /><ArrowButton aria-label="右へ"><Chevron r={90} /></ArrowButton></HScroll>
            <HZoom>
              <ArrowButton aria-label="縮小"><Sign /></ArrowButton>
              <HRange type="range" aria-label="横ズーム" defaultValue="58" />
              <ArrowButton aria-label="拡大"><Sign plus /></ArrowButton>
            </HZoom>
          </ScrollRow>
        </Editor>
      </Workspace>

      <Taskbar>
        <Weather>
          <svg width="26" height="30" viewBox="0 0 26 30">
            <circle cx="12" cy="17" r="10" fill="#f29a2e" />
            <path d="M1 12q-1-5 4-5 2-4 6-2v7zM11 24q0-4 4-4 2-4 6-1 3 1 3 5z" fill="#a9c4f2" />
            <circle cx="18" cy="8" r="8" fill="#c53323" />
            <text x="18" y="12" textAnchor="middle" fontSize="11" fontFamily="Noto Sans" fill="#fff">8</text>
          </svg>
          <WeatherText>33°C<small>くもり時々晴れ</small></WeatherText>
        </Weather>
        <Apps>
          <AppButton aria-label="スタート"><Art n="start" /><Dot /></AppButton>
          <Search>
            <svg width="16" height="16" viewBox="0 0 16 16"><circle cx="6.800" cy="6.800" r="5.500" fill="none" stroke="#26323a" strokeWidth="1.700" /><path d="M11 11l4 4" stroke="#26323a" strokeWidth="1.900" /></svg>
            <input aria-label="検索" placeholder="検索" />
            <svg width="48" height="24" viewBox="0 0 48 24">
              <path d="M2 20q12-6 30-3l14 1q-2 6-8 6H10z" fill="#6c4d42" />
              <path d="M3 22q3-9 9-6t8 5q-7 4-17 1z" fill="#71884a" />
              <circle cx="9" cy="9" r="7" fill="#dfe3f7" /><circle cx="18" cy="7" r="5" fill="#f2effb" /><circle cx="15" cy="13" r="5" fill="#cbc8ec" />
              <rect x="29" y="3" width="11" height="17" rx="2" fill="#f3a45a" /><rect x="32" y="7" width="5" height="11" rx="2" fill="#ffd9a0" />
            </svg>
          </Search>
          {apps.map((a) => <AppButton key={a.n} aria-label={a.label} $bg={a.bg}><Art n={a.n} /><Dot $c={a.dot} /></AppButton>)}
          <AppButton aria-label="Cubase" $bg="#edf6e8"><CubaseMark s={24} /><Dot $w={16} $c="#2f7f87" /></AppButton>
        </Apps>
        <Tray>
          <TrayButton aria-label="隠れているインジケーター"><svg width="12" height="8"><path d="M1 7l5-5 5 5" fill="none" stroke="#20282c" strokeWidth="1.500" /></svg></TrayButton>
          <TrayButton aria-label="マイク"><svg width="12" height="16" fill="none" stroke="#3a6070" strokeWidth="1.300"><rect x="3.500" y="1" width="5" height="9" rx="2.500" /><path d="M1 7.500q0 5 5 5t5-5M6 12.500V16" /></svg></TrayButton>
          <TrayButton $w={20} aria-label="IME"><svg width="12" height="14" fill="none" stroke="#98a79c" strokeWidth="1.300"><circle cx="6" cy="2.800" r="2" /><path d="M5 5 1 13M7 5l4 8M3 9.500h6" /></svg></TrayButton>
          <TrayButton $w={33} aria-label="常駐アプリ"><svg width="18" height="16"><circle cx="8" cy="7.500" r="7" fill="#0e6bcb" /><circle cx="14.500" cy="11.500" r="2.800" fill="#cf2f2f" /></svg></TrayButton>
          <TrayButton $w={50} aria-label="ネットワークと音量">
            <svg width="44" height="14" fill="none" stroke="#20282c" strokeWidth="1.300"><path d="M1 5.500q7.500-7 15 0M3.500 8q5-4.500 10 0M6 10.500q2.500-2 5 0" /><circle cx="8.500" cy="12.300" r="1" fill="#20282c" /><path d="M25 5h3l4-3.500v11L28 9h-3zM34.500 4.500q2 2.500 0 5M37 3q3 4 0 8M39.500 1.500q4 5.500 0 11" /></svg>
          </TrayButton>
          <Clock>{"12:25\n2025/08/15"}</Clock>
          <TrayButton $w={14} aria-label="通知"><svg width="14" height="16" viewBox="0 0 14 16"><path d="M2 12V8q0-5 4.500-5H8v4h4v5h1H1zM5.500 14.500h3" stroke="#20282c" strokeWidth="1.200" fill="#20282c" /><path d="M4.500 6.500h3l-3 3.500h3" fill="none" stroke="#d8eedd" strokeWidth="1.100" /><path d="M9.500 1H13L9.500 5H13" fill="none" stroke="#20282c" strokeWidth="1.200" /></svg></TrayButton>
        </Tray>
      </Taskbar>
    </Screen>
  );
}
